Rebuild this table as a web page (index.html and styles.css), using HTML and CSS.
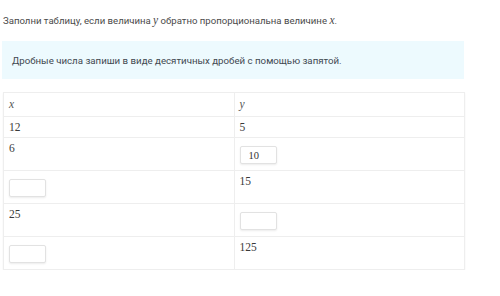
FILE: index.html
```html
<!DOCTYPE html>
<html lang="ru">
<head>
<meta charset="utf-8">
<link rel="stylesheet" href="styles.css">
</head>
<body>
<div class="task">
  <p class="question">Заполни таблицу, если величина <span class="math">y</span> обратно пропорциональна величине <span class="math">x</span>.</p>
  <div class="hint">Дробные числа запиши в виде десятичных дробей с помощью запятой.</div>
  <table class="grid">
    <tr class="head"><td><span class="math">x</span></td><td><span class="math">y</span></td></tr>
    <tr><td>12</td><td>5</td></tr>
    <tr><td>6</td><td><input class="answer" type="text" value="10"></td></tr>
    <tr><td><input class="answer" type="text" value=""></td><td>15</td></tr>
    <tr><td>25</td><td><input class="answer" type="text" value=""></td></tr>
    <tr><td><input class="answer" type="text" value=""></td><td>125</td></tr>
  </table>
</div>
</body>
</html>
```
FILE: styles.css
```css
html, body {
  margin: 0;
  padding: 0;
  background: #ffffff;
}

.task {
  width: 462px;
  padding: 14px 0 0 2px;
  font-family: Roboto, "Liberation Sans", sans-serif;
  color: #4a4a4a;
}

.question {
  margin: 0 0 0 1px;
  font-size: 9.6px;
  line-height: 13px;
}

.math {
  font-family: "Liberation Serif", serif;
  font-style: italic;
  font-size: 11.5px;
}

.hint {
  margin-top: 14px;
  height: 38px;
  padding: 0 10px;
  display: flex;
  align-items: center;
  background: #edfafe;
  font-size: 9.7px;
  color: #3f4850;
}

.grid {
  margin: 13px 0 0 1px;
  width: 462px;
  border-collapse: collapse;
  border: 1px solid #ebebeb;
  box-shadow: 0 1px 2px rgba(0, 0, 0, 0.05);
  font-family: "Liberation Serif", serif;
  font-size: 11.5px;
  color: #3a3a3a;
}

.grid td {
  width: 50%;
  border: 1px solid #eeeeee;
  padding: 4px 5px;
  line-height: 12px;
  vertical-align: top;
}

.grid .head td {
  padding: 5px 5px 6px;
  color: #555;
}

.answer {
  display: block;
  box-sizing: border-box;
  width: 37px;
  height: 18px;
  margin: 4px 0 2px 0;
  padding: 0 0 0 8px;
  border: 1px solid #e2e2e2;
  border-radius: 2px;
  box-shadow: 0 1px 2px rgba(0, 0, 0, 0.08);
  background: #fff;
  font-family: "Liberation Serif", serif;
  font-size: 10.5px;
  color: #333;
  outline: none;
}
```
